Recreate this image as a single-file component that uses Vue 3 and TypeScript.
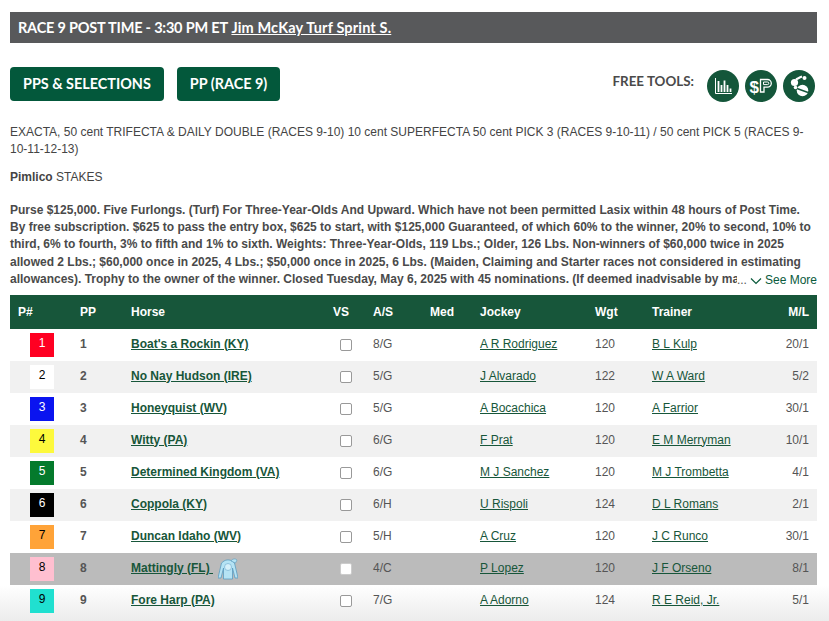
<script setup lang="ts">
interface Row { n: number; bg: string; fg: string; horse: string; as: string; jockey: string; wgt: number; trainer: string; ml: string; silk?: boolean; hi?: boolean }
const rows: Row[] = [
  { n: 1, bg: '#ff0022', fg: '#fff', horse: "Boat's a Rockin (KY)", as: '8/G', jockey: 'A R Rodriguez', wgt: 120, trainer: 'B L Kulp', ml: '20/1' },
  { n: 2, bg: '#fff', fg: '#000', horse: 'No Nay Hudson (IRE)', as: '5/G', jockey: 'J Alvarado', wgt: 122, trainer: 'W A Ward', ml: '5/2' },
  { n: 3, bg: '#0a14f0', fg: '#fff', horse: 'Honeyquist (WV)', as: '5/G', jockey: 'A Bocachica', wgt: 120, trainer: 'A Farrior', ml: '30/1' },
  { n: 4, bg: '#fdf93c', fg: '#000', horse: 'Witty (PA)', as: '6/G', jockey: 'F Prat', wgt: 120, trainer: 'E M Merryman', ml: '10/1' },
  { n: 5, bg: '#047a2c', fg: '#fff', horse: 'Determined Kingdom (VA)', as: '6/G', jockey: 'M J Sanchez', wgt: 120, trainer: 'M J Trombetta', ml: '4/1' },
  { n: 6, bg: '#000', fg: '#fff', horse: 'Coppola (KY)', as: '6/H', jockey: 'U Rispoli', wgt: 124, trainer: 'D L Romans', ml: '2/1' },
  { n: 7, bg: '#ffa338', fg: '#000', horse: 'Duncan Idaho (WV)', as: '5/H', jockey: 'A Cruz', wgt: 120, trainer: 'J C Runco', ml: '30/1' },
  { n: 8, bg: '#ffbfd0', fg: '#000', horse: 'Mattingly (FL)', as: '4/C', jockey: 'P Lopez', wgt: 120, trainer: 'J F Orseno', ml: '8/1', silk: true, hi: true },
  { n: 9, bg: '#20e0d0', fg: '#000', horse: 'Fore Harp (PA)', as: '7/G', jockey: 'A Adorno', wgt: 124, trainer: 'R E Reid, Jr.', ml: '5/1' },
]
</script>

<template>
  <div class="page">
    <div class="fade"></div>
    <div class="title"><span class="title-lead">RACE 9 POST TIME - 3:30 PM ET</span> <a class="title-link">Jim McKay Turf Sprint S.</a></div>

    <div class="actions">
      <button class="btn">PPS &amp; SELECTIONS</button>
      <button class="btn">PP (RACE 9)</button>
      <div class="tools">
        <span class="tools-label">FREE TOOLS:</span>
        <span class="tool">
          <svg viewBox="0 0 32 32" width="32" height="32" fill="none" stroke="#fff">
            <path d="M8.500 8v15.500H25" stroke-width="1" />
            <path d="M11.500 11v11M14.500 15v7M17.500 10.500v11.500M20.500 15v7M23.500 18.500v3.500" stroke-width="1.800" />
          </svg>
        </span>
        <span class="tool">
          <svg viewBox="0 0 32 32" width="32" height="32">
            <text x="4.500" y="22.500" class="tool-dollar">$</text>
            <path d="M15.500 9.500h7a3.800 3.800 0 0 1 0 7.600H19V22h-3.500z" fill="#14563a" stroke="#fff" stroke-width="1.300" />
            <path d="M18.500 12h4a1.300 1.300 0 0 1 0 2.600h-4z" fill="none" stroke="#fff" stroke-width="1" />
          </svg>
        </span>
        <span class="tool">
          <svg viewBox="0 0 32 32" width="32" height="32">
            <circle cx="19.500" cy="20.500" r="5.800" fill="#fff" />
            <path d="M14 18.500l11 4" stroke="#14563a" stroke-width="1.500" />
            <circle cx="11.500" cy="12.500" r="3.600" fill="#fff" />
            <circle cx="12.500" cy="17.500" r="1.800" fill="#fff" />
            <path d="M13 9.500c2-1 3.500-2 6-3" fill="none" stroke="#fff" stroke-width="2" />
            <circle cx="21.500" cy="8" r="2" fill="#fff" />
          </svg>
        </span>
      </div>
    </div>

    <p class="wager">EXACTA, 50 cent TRIFECTA &amp; DAILY DOUBLE (RACES 9-10) 10 cent SUPERFECTA 50 cent PICK 3 (RACES 9-10-11) / 50 cent PICK 5 (RACES 9-10-11-12-13)</p>
    <p class="stakes"><b>Pimlico</b> STAKES</p>

    <div class="conditions">
      <b>Purse $125,000. Five Furlongs. (Turf) For Three-Year-Olds And Upward. Which have not been permitted Lasix within 48 hours of Post Time. By free subscription. $625 to pass the entry box, $625 to start, with $125,000 Guaranteed, of which 60% to the winner, 20% to second, 10% to third, 6% to fourth, 3% to fifth and 1% to sixth. Weights: Three-Year-Olds, 119 Lbs.; Older, 126 Lbs. Non-winners of $60,000 twice in 2025 allowed 2 Lbs.; $60,000 once in 2025, 4 Lbs.; $50,000 once in 2025, 6 Lbs. (Maiden, Claiming and Starter races not considered in estimating allowances). Trophy to the owner of the winner. Closed Tuesday, May 6, 2025 with 45 nominations. (If deemed inadvisable by ma</b>
      <span class="more">
        <span class="dots">...</span>
        <svg width="12" height="8" viewBox="0 0 12 8" fill="none" stroke="#0a5a3c" stroke-width="1.200"><path d="M1 1.500l5 5 5-5" /></svg>
        See More
      </span>
    </div>

    <table class="entries">
      <colgroup>
        <col class="c-p" /><col class="c-pp" /><col class="c-horse" /><col class="c-vs" /><col class="c-as" />
        <col class="c-med" /><col class="c-jockey" /><col class="c-wgt" /><col class="c-trainer" /><col class="c-ml" />
      </colgroup>
      <thead>
        <tr>
          <th>P#</th><th>PP</th><th>Horse</th><th>VS</th><th>A/S</th><th>Med</th><th>Jockey</th><th>Wgt</th><th>Trainer</th><th class="right">M/L</th>
        </tr>
      </thead>
      <tbody>
        <tr v-for="(r, i) in rows" :key="r.n" :class="{ even: i % 2 === 1 && !r.hi, hi: r.hi }">
          <td><span class="num" :style="{ background: r.bg, color: r.fg }">{{ r.n }}</span></td>
          <td class="pp">{{ r.n }}</td>
          <td class="horse">
            <a>{{ r.horse }}<template v-if="r.silk">&nbsp;</template></a>
            <svg v-if="r.silk" class="silk" width="20" height="22" viewBox="0 0 20 22">
              <path d="M6 3C8 1.500 12 1.500 14 3l2.500 2L20 20h-3l-2.500-10v11h-9V10L3 20H0L3.500 5z" fill="#b5e3f4" stroke="#5a9cc0" stroke-width=".8" />
              <circle cx="10" cy="9" r="3.500" fill="#d5f0fa" stroke="#7fb8d6" stroke-width=".8" />
              <path d="M13 3c1-2.200 4.500-2.800 6-1l-1.500 3z" fill="#b5e3f4" stroke="#5a9cc0" stroke-width=".6" />
            </svg>
          </td>
          <td><span class="check"></span></td>
          <td>{{ r.as }}</td>
          <td></td>
          <td><a class="person">{{ r.jockey }}</a></td>
          <td>{{ r.wgt }}</td>
          <td><a class="person">{{ r.trainer }}</a></td>
          <td class="right">{{ r.ml }}</td>
        </tr>
      </tbody>
    </table>
  </div>
</template>

<style>
html, body { margin: 0; background: #fff; overflow: hidden; }
</style>

<style scoped>
.page {
  width: 829px;
  height: 621px;
  box-sizing: border-box;
  padding: 12px 12px 0 10px;
  position: relative;
  overflow: hidden;
  font-family: "Liberation Sans", Arial, sans-serif;
  font-size: 12px;
  color: #444;
}
.title {
  height: 31px;
  background: #58595b;
  color: #fff;
  padding-left: 8px;
  font: 700 14.500px/31px Lato, sans-serif;
  white-space: nowrap;
}
.title-lead { letter-spacing: -.2px; }
.title-link { text-decoration: underline; letter-spacing: .15px; }
.actions {
  display: flex;
  align-items: center;
  margin-top: 24px;
  gap: 13px;
  height: 34px;
}
.btn {
  height: 34px;
  border: 0;
  border-radius: 4px;
  background: #03583b;
  color: #fff;
  font: 700 14.400px Lato, sans-serif;
  padding: 0 13px 2px;
}
.tools {
  margin-left: auto;
  margin-right: 2px;
  margin-top: 4px;
  display: flex;
  align-items: center;
  gap: 6px;
}
.tools-label {
  font: 700 13.400px Lato, sans-serif;
  color: #4a4a4a;
  margin-right: 7px;
  position: relative;
  top: -5px;
}
.tool {
  width: 32px;
  height: 32px;
  border-radius: 50%;
  background: #14563a;
  display: block;
}
.tool svg { display: block; }
.tool-dollar { font: 700 17px "Liberation Sans", sans-serif; fill: #fff; }
.wager {
  margin: 23px 0 0;
  line-height: 17px;
}
.stakes {
  margin: 11px 0 0;
  line-height: 17px;
}
.conditions {
  margin-top: 16px;
  height: 85px;
  line-height: 17.200px;
  position: relative;
  color: #4a4a4a;
}
.more {
  position: absolute;
  right: 0;
  bottom: -2px;
  color: #0a5a3c;
  font-weight: 400;
  height: 17px;
  display: flex;
  align-items: center;
  gap: 3px;
  background: #fff;
}
.dots { color: #555; }
.entries {
  position: relative;
  width: 807px;
  margin-top: 8px;
  border-collapse: collapse;
  table-layout: fixed;
}
.c-p { width: 70px; }
.c-pp { width: 51px; }
.c-horse { width: 202px; }
.c-vs { width: 40px; }
.c-as { width: 57px; }
.c-med { width: 50px; }
.c-jockey { width: 115px; }
.c-wgt { width: 57px; }
.c-trainer { width: 125px; }
.c-ml { width: 40px; }
thead tr { background: #17563a; height: 34px; }
th {
  color: #fff;
  font-size: 12px;
  font-weight: 700;
  text-align: left;
  padding: 0 0 0 8px;
}
td {
  padding: 0 0 3px 8px;
  height: 29px;
  color: #555;
  white-space: nowrap;
}
th:nth-child(n+2), td:nth-child(n+2) { padding-left: 0; }
th.right, td.right { text-align: right; padding-right: 8px; }
tr.even { background: #f1f1f1; }
tr.hi { background: #bbb; }
td:first-child { padding: 0 0 0 20px; }
.num {
  display: block;
  width: 24px;
  height: 24px;
  line-height: 21px;
  text-align: center;
  font-size: 12px;
}
.pp { font-weight: 700; }
.horse a {
  font-weight: 700;
  color: #17563a;
  text-decoration: underline;
}
.horse { position: relative; }
.silk { position: absolute; left: 87px; top: 5px; }
.person { color: #17563a; text-decoration: underline; }
.check {
  display: block;
  width: 10px;
  height: 10px;
  border: 1px solid #999;
  border-radius: 2px;
  background: #fff;
  margin: 2px 0 0 7px;
}
.hi .check { border-color: #ccc; }
.fade {
  position: absolute;
  left: 0;
  right: 0;
  bottom: 0;
  height: 36px;
  background: linear-gradient(#fff, #ececec);
}
</style>
